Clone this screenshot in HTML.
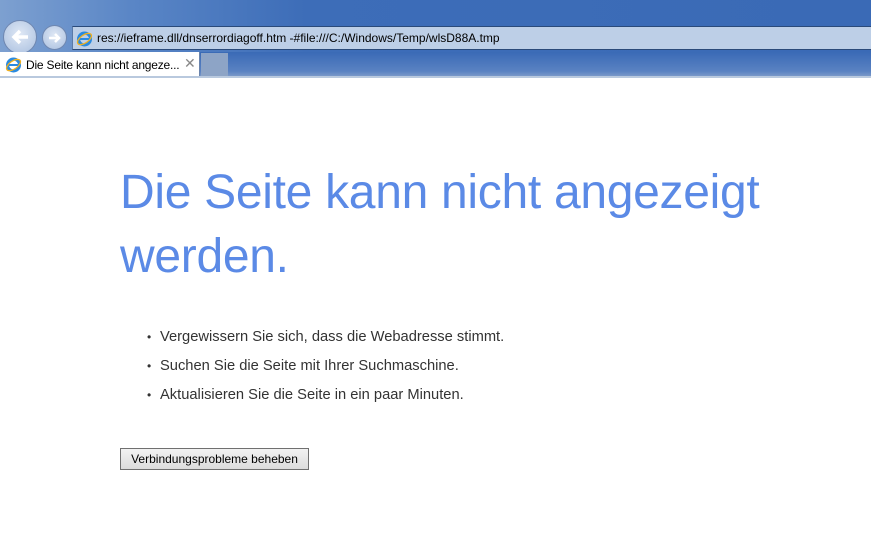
<!DOCTYPE html>
<html><head><meta charset="utf-8"><style>
*{margin:0;padding:0;box-sizing:border-box}
body{width:871px;height:536px;overflow:hidden;background:#fff;font-family:"Liberation Sans",sans-serif;position:relative}
#chrome{position:absolute;left:0;top:0;width:871px;height:78px;background:linear-gradient(90deg,#7da0d0 0%,#5a86c6 15%,#3d6db8 35%,#3a6ab6 100%)}
#addr{position:absolute;left:72px;top:26px;width:799px;height:24px;background:#bdcfe7;border-top:1px solid #2a4a7a;border-bottom:1px solid #2a4a7a;border-left:1px solid #5a7aa8}
#addr span{position:absolute;left:24px;top:4px;font-size:12px;color:#000}
.circ{position:absolute;border-radius:50%;border:1px solid #6f87b0;background:radial-gradient(circle at 50% 40%,#dfe8f5,#a9bfdf)}
#tabs{position:absolute;left:0;top:52px;width:871px;height:24px;background:linear-gradient(180deg,#3a6ab6,#5a82c2 80%,#7a98c8)}
#tab{position:absolute;left:0;top:52px;width:200px;height:25px;background:#fff;border-right:1px solid #6a84ad}
#tab span{position:absolute;left:26px;top:6px;font-size:12px;color:#000;letter-spacing:-0.2px}
#tab b{position:absolute;left:184px;top:3px;font-size:14px;color:#888;font-weight:normal}
#newtab{position:absolute;left:201px;top:53px;width:27px;height:23px;background:#8da4c6}
#line{position:absolute;left:0;top:76px;width:871px;height:2px;background:#b9c9de}
h1{position:absolute;left:120px;top:161px;font-weight:normal;font-size:48px;line-height:64px;color:#5b8ae6;letter-spacing:-0.3px;width:760px}
ul{position:absolute;left:147px;top:327px;list-style:none;font-size:14.7px;color:#333}
li{height:29px;line-height:20px}
li:before{content:"•";display:inline-block;width:13px;font-size:12px}
button{position:absolute;left:120px;top:448px;width:189px;height:22px;font-family:"Liberation Sans",sans-serif;font-size:12px;color:#000;background:linear-gradient(#f2f2f2,#dcdcdc);border:1px solid #707070}
</style></head><body>
<div id="chrome">
<div class="circ" style="left:3px;top:20px;width:34px;height:34px"></div>
<div class="circ" style="left:42px;top:25px;width:25px;height:25px"></div>
<svg style="position:absolute;left:9px;top:27px" width="22" height="20"><path d="M19 10H5M11 4L5 10L11 16" stroke="#fff" stroke-width="3.5" fill="none"/></svg>
<svg style="position:absolute;left:46px;top:30px" width="17" height="16"><path d="M3 8H13M9 4L13 8L9 12" stroke="#fff" stroke-width="2.5" fill="none"/></svg>
<div id="addr"><svg style="position:absolute;left:3px;top:3px" width="17" height="17"><circle cx="8.5" cy="9" r="6" fill="none" stroke="#2a8ae0" stroke-width="3"/><path d="M3 9H14" stroke="#2a8ae0" stroke-width="2"/><ellipse cx="8.5" cy="9" rx="8" ry="4" fill="none" stroke="#f0b020" stroke-width="1.3" transform="rotate(-35 8.5 9)"/></svg><span>res://ieframe.dll/dnserrordiagoff.htm -#file:///C:/Windows/Temp/wlsD88A.tmp</span></div>
</div>
<div id="tabs"></div>
<div id="tab"><svg style="position:absolute;left:5px;top:4px" width="17" height="17"><circle cx="8.5" cy="9" r="6" fill="none" stroke="#2a8ae0" stroke-width="3"/><path d="M3 9H14" stroke="#2a8ae0" stroke-width="2"/><ellipse cx="8.5" cy="9" rx="8" ry="4" fill="none" stroke="#f0b020" stroke-width="1.3" transform="rotate(-35 8.5 9)"/></svg><span>Die Seite kann nicht angeze...</span><b>✕</b></div>
<div id="newtab"></div>
<div id="line"></div>
<h1>Die Seite kann nicht angezeigt werden.</h1>
<ul>
<li>Vergewissern Sie sich, dass die Webadresse stimmt.</li>
<li>Suchen Sie die Seite mit Ihrer Suchmaschine.</li>
<li>Aktualisieren Sie die Seite in ein paar Minuten.</li>
</ul>
<button>Verbindungsprobleme beheben</button>
</body></html>
